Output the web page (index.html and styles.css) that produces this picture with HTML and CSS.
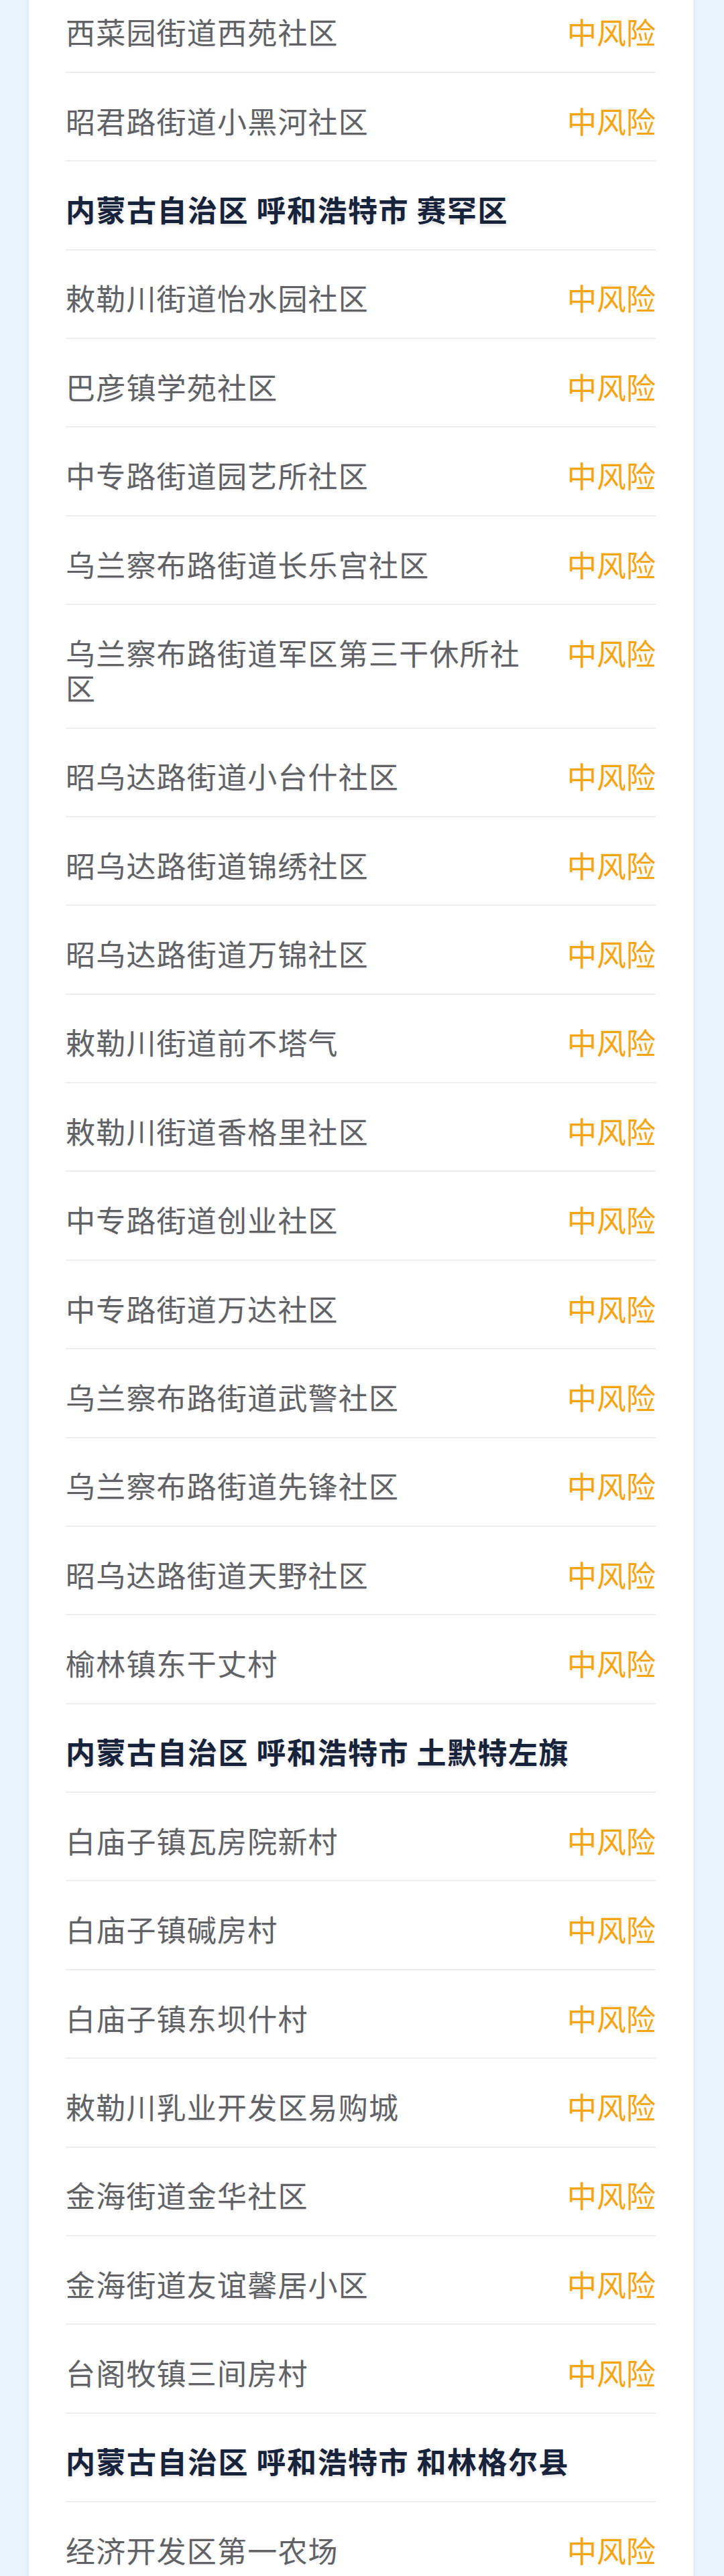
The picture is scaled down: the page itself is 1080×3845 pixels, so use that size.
FILE: index.html
```html
<!DOCTYPE html>
<html lang="zh-CN">
<head>
    <meta charset="UTF-8">
    <meta name="viewport" content="width=device-width, initial-scale=1.0">
    <title>风险地区</title>
    <link rel="stylesheet" href="styles.css">
</head>
<body>
    <div class="card">
        <ul class="area-list">
            <li class="area-item"><span class="area-name">西菜园街道西苑社区</span><span class="level">中风险</span></li>
            <li class="area-item"><span class="area-name">昭君路街道小黑河社区</span><span class="level">中风险</span></li>
            <li class="area-item area-title">内蒙古自治区 呼和浩特市 赛罕区</li>
            <li class="area-item"><span class="area-name">敕勒川街道怡水园社区</span><span class="level">中风险</span></li>
            <li class="area-item"><span class="area-name">巴彦镇学苑社区</span><span class="level">中风险</span></li>
            <li class="area-item"><span class="area-name">中专路街道园艺所社区</span><span class="level">中风险</span></li>
            <li class="area-item"><span class="area-name">乌兰察布路街道长乐宫社区</span><span class="level">中风险</span></li>
            <li class="area-item"><span class="area-name">乌兰察布路街道军区第三干休所社区</span><span class="level">中风险</span></li>
            <li class="area-item"><span class="area-name">昭乌达路街道小台什社区</span><span class="level">中风险</span></li>
            <li class="area-item"><span class="area-name">昭乌达路街道锦绣社区</span><span class="level">中风险</span></li>
            <li class="area-item"><span class="area-name">昭乌达路街道万锦社区</span><span class="level">中风险</span></li>
            <li class="area-item"><span class="area-name">敕勒川街道前不塔气</span><span class="level">中风险</span></li>
            <li class="area-item"><span class="area-name">敕勒川街道香格里社区</span><span class="level">中风险</span></li>
            <li class="area-item"><span class="area-name">中专路街道创业社区</span><span class="level">中风险</span></li>
            <li class="area-item"><span class="area-name">中专路街道万达社区</span><span class="level">中风险</span></li>
            <li class="area-item"><span class="area-name">乌兰察布路街道武警社区</span><span class="level">中风险</span></li>
            <li class="area-item"><span class="area-name">乌兰察布路街道先锋社区</span><span class="level">中风险</span></li>
            <li class="area-item"><span class="area-name">昭乌达路街道天野社区</span><span class="level">中风险</span></li>
            <li class="area-item"><span class="area-name">榆林镇东干丈村</span><span class="level">中风险</span></li>
            <li class="area-item area-title">内蒙古自治区 呼和浩特市 土默特左旗</li>
            <li class="area-item"><span class="area-name">白庙子镇瓦房院新村</span><span class="level">中风险</span></li>
            <li class="area-item"><span class="area-name">白庙子镇碱房村</span><span class="level">中风险</span></li>
            <li class="area-item"><span class="area-name">白庙子镇东坝什村</span><span class="level">中风险</span></li>
            <li class="area-item"><span class="area-name">敕勒川乳业开发区易购城</span><span class="level">中风险</span></li>
            <li class="area-item"><span class="area-name">金海街道金华社区</span><span class="level">中风险</span></li>
            <li class="area-item"><span class="area-name">金海街道友谊馨居小区</span><span class="level">中风险</span></li>
            <li class="area-item"><span class="area-name">台阁牧镇三间房村</span><span class="level">中风险</span></li>
            <li class="area-item area-title">内蒙古自治区 呼和浩特市 和林格尔县</li>
            <li class="area-item"><span class="area-name">经济开发区第一农场</span><span class="level">中风险</span></li>
        </ul>
    </div>
</body>
</html>
```

FILE: styles.css
```css
html, body {
    margin: 0;
    padding: 0;
}
body {
    background-color: #e9f4fd;
    font-family: "Noto Sans CJK SC", "Noto Sans", sans-serif;
    overflow: hidden;
}
.card {
    margin: -23.4px 46px 0 43px;
    padding: 0 56px 0 55px;
    background-color: #fff;
    box-shadow: 0 0 6px rgba(120, 160, 200, 0.15);
}
.area-list {
    list-style: none;
    margin: 0;
    padding: 0;
}
.area-item {
    display: flex;
    align-items: flex-start;
    justify-content: space-between;
    padding: 44.7px 0 33.7px;
    border-bottom: 2px solid #ebedf0;
    font-size: 44px;
    line-height: 52px;
    color: #606266;
    text-shadow: 0 2px 4px rgba(0, 0, 0, 0.06);
}
.area-name {
    flex: 1;
    margin-right: 60px;
    letter-spacing: 1.2px;
}
.level {
    flex-shrink: 0;
    color: #f5a50f;
}
.area-title {
    font-weight: bold;
    letter-spacing: 1.5px;
    color: #17233a;
    text-shadow: 0 3px 5px rgba(0, 0, 0, 0.12);
}
```
